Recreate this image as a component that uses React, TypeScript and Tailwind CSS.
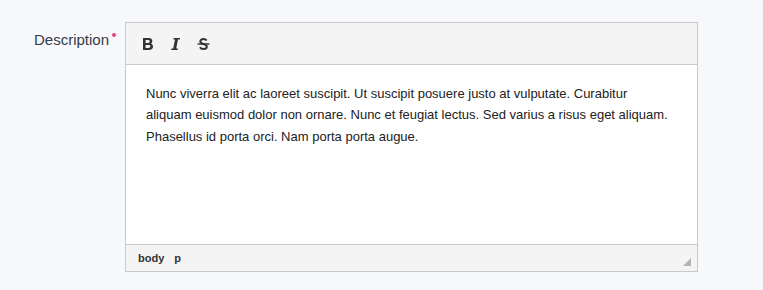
import React from "react";

const font = { fontFamily: '"Liberation Sans", Arial, sans-serif' };

function BoldIcon() {
  return (
    <svg width="12" height="14" viewBox="0 0 12 14" className="block">
      <path
        fillRule="evenodd"
        fill="#333"
        d="M1 1H6.5C9 1 10.3 2.2 10.3 4C10.3 5.3 9.6 6.2 8.6 6.6C10 6.9 11 8 11 9.6C11 11.7 9.6 13 7 13H1ZM3.6 3.1V5.9H6.1C7.1 5.9 7.7 5.4 7.7 4.5C7.7 3.6 7.1 3.1 6.1 3.1ZM3.6 8V10.9H6.5C7.7 10.9 8.3 10.4 8.3 9.45C8.3 8.5 7.7 8 6.5 8Z"
      />
    </svg>
  );
}

function ItalicIcon() {
  return (
    <svg width="11" height="14" viewBox="0 0 11 14" className="block">
      <path
        fill="#333"
        d="M3.6 1H10.1L9.8 2.6H8L6.2 11.4H7.9L7.6 13H1.1L1.4 11.4H3.2L5 2.6H3.3Z"
      />
    </svg>
  );
}

function StrikeIcon() {
  return (
    <svg width="13" height="14" viewBox="0 0 13 14" className="block">
      <path
        fill="none"
        stroke="#333"
        strokeWidth="2"
        d="M9.6 3.6C9 2.5 7.9 2 6.5 2C4.6 2 3.3 3 3.3 4.4C3.3 6 4.8 6.5 6.5 7C8.3 7.5 9.8 8 9.8 9.7C9.8 11.2 8.4 12 6.5 12C4.9 12 3.6 11.4 3 10.2"
      />
      <path stroke="#333" strokeWidth="1.4" d="M0.5 7H12.5" />
    </svg>
  );
}

export default function App() {
  return (
    <div className="min-h-[290px] w-full bg-[#f7f8fc] pt-[22px]" style={font}>
      <div className="flex">
        <label className="flex w-[125px] justify-end pr-[9px] pt-[9px] text-[15px] leading-[17px] text-[#353b47]">
          <span>Description</span>
          <span className="ml-[3px] mt-[2px] h-[4px] w-[4px] rounded-full bg-[#e0457b]" />
        </label>

        <div className="flex h-[250px] w-[573px] flex-col border border-[#c9c9c9] bg-white">
          <div className="flex h-[42px] items-center gap-[16px] border-b border-[#c9c9c9] bg-[#f4f4f4] pl-[16px] pt-[1px]">
            <BoldIcon />
            <ItalicIcon />
            <StrikeIcon />
          </div>

          <div className="flex-1 pl-[20px] pr-[26px] pt-[18px] text-[13px] leading-[21.4px] text-[#222]">
            <p>
              Nunc viverra elit ac laoreet suscipit. Ut suscipit posuere justo at vulputate. Curabitur
              aliquam euismod dolor non ornare. Nunc et feugiat lectus. Sed varius a risus eget aliquam.
              Phasellus id porta orci. Nam porta porta augue.
            </p>
          </div>

          <div className="relative flex h-[27px] items-center gap-[10px] border-t border-[#c9c9c9] bg-[#f4f4f4] pl-[12px] text-[11px] font-bold text-[#333]">
            <span>body</span>
            <span>p</span>
            <svg width="8" height="8" viewBox="0 0 8 8" className="absolute bottom-[5px] right-[6px]">
              <path fill="#b3b3b3" d="M8 0V8H0Z" />
            </svg>
          </div>
        </div>
      </div>
    </div>
  );
}
